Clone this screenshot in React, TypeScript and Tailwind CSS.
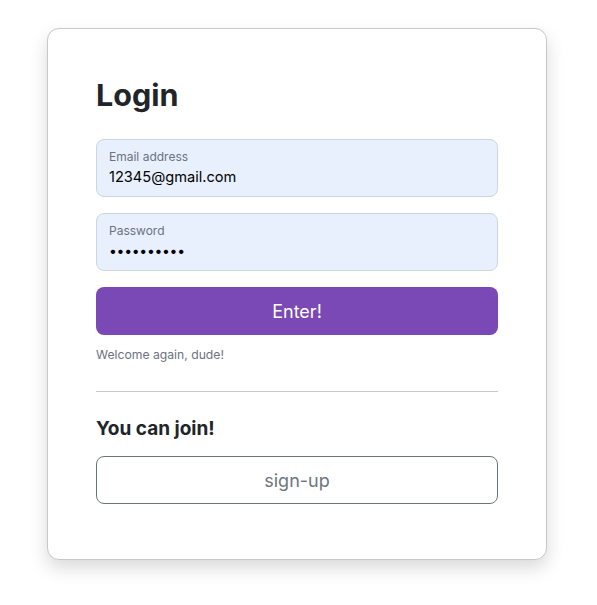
import React from "react";

export default function App() {
  return (
    <div className="min-h-[605px] bg-white pt-[28px]" style={{ fontFamily: "Inter, 'Noto Sans', sans-serif" }}>
      <div className="ml-[47px] w-[500px] rounded-[12px] border border-[#c8c8c8] bg-white px-[48px] pt-[46px] pb-[55px] shadow-[0_8px_18px_rgba(0,0,0,0.15)]">
        <h1 className="text-[30.5px] font-bold leading-[40px] text-[#212529]">Login</h1>
        <div className="mt-[24px] flex flex-col gap-[16px]">
          <div className="h-[58px] rounded-[8px] border border-[#cdd5e0] bg-[#e8f0fe] px-[12px] pt-[9px]">
            <div className="text-[12px] leading-[15px] text-[#6b7280]">Email address</div>
            <div className="mt-[3px] text-[14.6px] leading-[20px] text-[#000]">12345@gmail.com</div>
          </div>
          <div className="h-[58px] rounded-[8px] border border-[#cdd5e0] bg-[#e8f0fe] px-[12px] pt-[9px]">
            <div className="text-[12px] leading-[15px] text-[#6b7280]">Password</div>
            <div className="mt-[3px] text-[14px] leading-[20px] tracking-[-0.3px] text-[#000]">••••••••••</div>
          </div>
          <button className="h-[48px] w-full rounded-[8px] bg-[#7a49b6] text-[18px] text-white">Enter!</button>
        </div>
        <p className="mt-[12px] text-[12.2px] leading-[16px] text-[#6b7280]">Welcome again, dude!</p>
        <hr className="mt-[28px] border-t border-[#c8c8c8]" />
        <h2 className="mt-[23px] text-[19px] font-bold leading-[28px] text-[#212529]">You can join!</h2>
        <button className="mt-[13px] h-[48px] w-full rounded-[8px] border border-[#6c757d] bg-white text-[18px] text-[#6c757d]">sign-up</button>
      </div>
    </div>
  );
}
